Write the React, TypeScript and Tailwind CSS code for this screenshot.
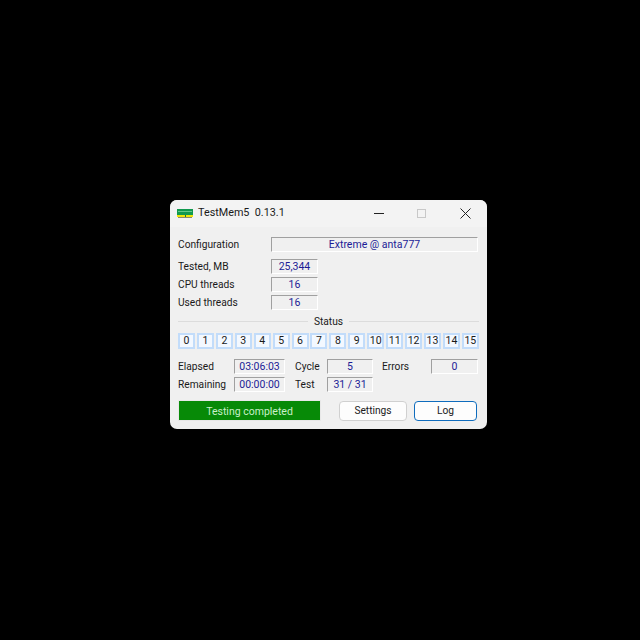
import React from 'react';

const FONT = "font-['Roboto','Open_Sans',sans-serif]";

const Field = ({ value, className = '' }: { value: string; className?: string }) => (
  <div
    className={`h-[15px] pt-[2px] flex items-center justify-center border-t border-l border-t-[#a0a0a0] border-l-[#a0a0a0] border-b border-r border-b-white border-r-white text-[#1c1c96] text-[10.5px] leading-none ${className}`}
  >
    {value}
  </div>
);

const Label = ({ text, className = '' }: { text: string; className?: string }) => (
  <div className={`text-[10.2px] leading-[15px] text-[#1a1a1a] ${className}`}>{text}</div>
);

const InfoRow = ({ label, value }: { label: string; value: string }) => (
  <div className="flex h-[15px] items-center">
    <Label text={label} className="w-[93px]" />
    <Field value={value} className="w-[47px]" />
  </div>
);

const threads = Array.from({ length: 16 }, (_, i) => String(i));

const App = () => {
  return (
    <div className={`min-h-[640px] w-[640px] bg-black pl-[170px] pt-[200px] ${FONT}`}>
      <div className="w-[317px] h-[229px] rounded-[7px] bg-[#f0f0f0] overflow-hidden flex flex-col">
        {/* title bar */}
        <div className="h-[27px] flex items-center bg-[#f3f3f3] pl-[7px]">
          <svg width="16" height="10" viewBox="0 0 16 10" className="mr-[5px]">
            <rect x="0" y="0" width="16" height="6" fill="#12994f" />
            <rect x="1" y="2" width="14" height="1" fill="#63c98a" />
            <rect x="0" y="6" width="16" height="2" fill="#f0e60a" />
            <rect x="8" y="6" width="1" height="2" fill="#1b7a3c" />
            <rect x="1" y="8" width="14" height="1" fill="#8a8a70" />
          </svg>
          <span className="text-[10.8px] text-[#1a1a1a] whitespace-pre">TestMem5  0.13.1</span>
          <div className="ml-auto flex items-center h-full">
            <div className="w-[10px] h-px bg-[#222] mr-[33px]" />
            <div className="w-[9px] h-[9px] border border-[#c8c8c8] mr-[34px]" />
            <svg width="11" height="11" viewBox="0 0 11 11" className="mr-[16px]">
              <path d="M0.5 0.5L10.5 10.5M10.5 0.5L0.5 10.5" stroke="#222" strokeWidth="1" />
            </svg>
          </div>
        </div>

        <div className="flex-1 px-[8px] pt-[10px]">
          <div className="flex h-[15px] items-center">
            <Label text="Configuration" className="w-[93px]" />
            <Field value="Extreme @ anta777" className="w-[207px]" />
          </div>

          <div className="mt-[7px] flex flex-col gap-[3px]">
            <InfoRow label="Tested, MB" value="25,344" />
            <InfoRow label="CPU threads" value="16" />
            <InfoRow label="Used threads" value="16" />
          </div>

          {/* status divider */}
          <div className="mt-[4px] h-[15px] flex items-center gap-[6px]">
            <div className="flex-1 h-px bg-[#dcdcdc]" />
            <span className="text-[10.2px] text-[#1a1a1a] leading-none pt-[1px]">Status</span>
            <div className="flex-1 h-px bg-[#dcdcdc]" />
          </div>

          <div className="mt-[4px] flex justify-between">
            {threads.map((t) => (
              <div
                key={t}
                className="w-[17px] h-[16px] pt-[1px] flex items-center justify-center bg-[#f3f8ff] border-2 border-[#c2dcfa] text-[10.5px] leading-none text-[#1a1a1a]"
              >
                {t}
              </div>
            ))}
          </div>

          <div className="mt-[10px] grid grid-cols-[56px_51px_42px_46px_58px_47px] gap-y-[3px]">
            <Label text="Elapsed" />
            <Field value="03:06:03" />
            <Label text="Cycle" className="pl-[10px]" />
            <Field value="5" />
            <Label text="Errors" className="pl-[9px]" />
            <Field value="0" />
            <Label text="Remaining" />
            <Field value="00:00:00" />
            <Label text="Test" className="pl-[10px]" />
            <Field value="31 / 31" />
          </div>

          <div className="mt-[8px] flex items-center">
            <div className="w-[143px] h-[21px] pt-[2px] bg-[#078a07] text-[#c9f0c9] text-[10.5px] flex items-center justify-center border border-[#e8e8e8]">
              Testing completed
            </div>
            <button className="ml-[18px] w-[68px] h-[20px] pt-[1px] rounded-[4px] bg-[#fdfdfd] border border-[#d0d0d0] text-[10.2px] text-[#1a1a1a]">
              Settings
            </button>
            <button className="ml-[7px] w-[63px] h-[20px] pt-[1px] rounded-[4px] bg-[#fdfdfd] border border-[#0f6cbd] text-[10.2px] text-[#1a1a1a]">
              Log
            </button>
          </div>
        </div>
      </div>
    </div>
  );
};

export default App;
